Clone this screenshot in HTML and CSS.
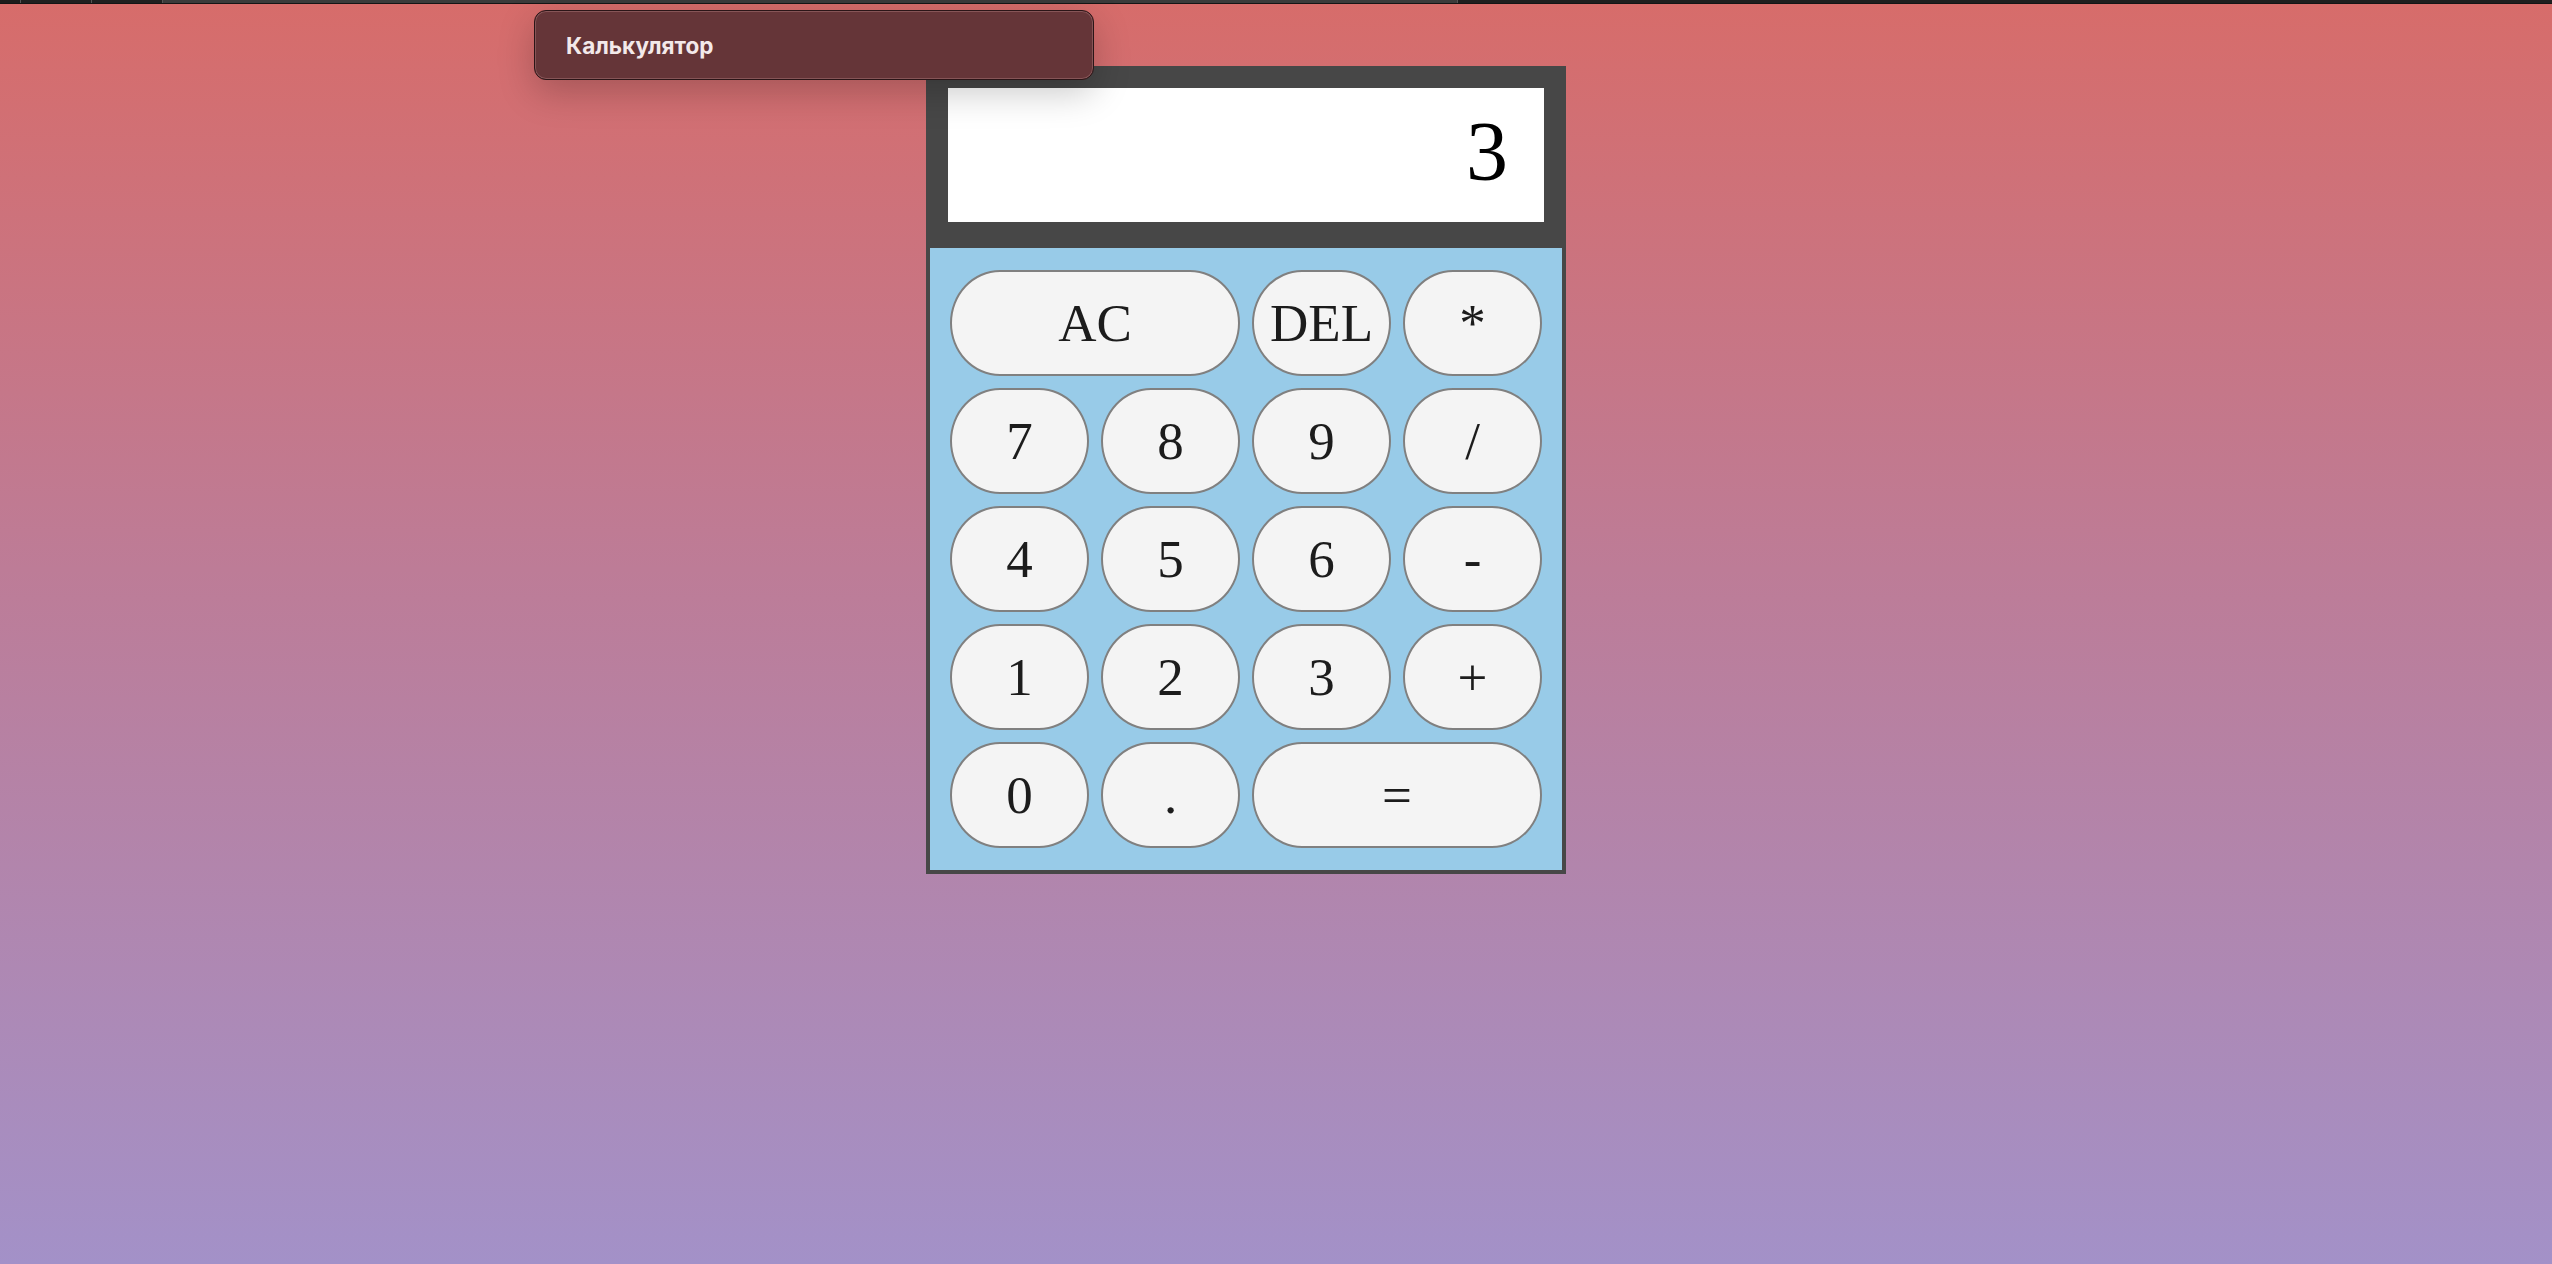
FILE: index.html
```html
<!DOCTYPE html>
<html lang="ru">
<head>
<meta charset="utf-8">
<title>Калькулятор</title>
<link rel="stylesheet" href="styles.css">
</head>
<body>
<div class="tabstrip">
  <span class="seg seg-a"></span>
  <span class="seg seg-b"></span>
  <span class="seg seg-c"></span>
  <span class="seg seg-d"></span>
  <span class="seg seg-e"></span>
</div>
<div class="popup">Калькулятор</div>
<main class="stage">
  <div class="calc">
    <div class="screen-area">
      <div class="screen">3</div>
    </div>
    <div class="keys">
      <button class="key wide">AC</button>
      <button class="key">DEL</button>
      <button class="key">*</button>
      <button class="key">7</button>
      <button class="key">8</button>
      <button class="key">9</button>
      <button class="key">/</button>
      <button class="key">4</button>
      <button class="key">5</button>
      <button class="key">6</button>
      <button class="key">-</button>
      <button class="key">1</button>
      <button class="key">2</button>
      <button class="key">3</button>
      <button class="key">+</button>
      <button class="key">0</button>
      <button class="key">.</button>
      <button class="key wide">=</button>
    </div>
  </div>
</main>
</body>
</html>
```
FILE: styles.css
```css
html, body {
  margin: 0;
  padding: 0;
}
body {
  min-height: 100vh;
  background: linear-gradient(to bottom, #d76c6a 0%, #bd7c97 45%, #a391c8 100%);
  font-family: "Liberation Serif", "Times New Roman", serif;
  position: relative;
}
.tabstrip {
  display: flex;
  height: 3px;
  border-bottom: 1px solid #151515;
  background: #555;
  gap: 1px;
}
.seg { display: block; height: 100%; }
.seg-a { width: 20px; background: #1c1c1c; }
.seg-b { width: 70px; background: #202020; }
.seg-c { width: 70px; background: #202020; }
.seg-d { width: 1294px; background: #3b3b3b; }
.seg-e { flex: 1; background: #1f1f1f; }

.popup {
  position: absolute;
  left: 534px;
  top: 10px;
  width: 560px;
  height: 70px;
  box-sizing: border-box;
  padding-left: 31px;
  display: flex;
  align-items: center;
  background: #653538;
  border: 1px solid #2b1517;
  box-shadow: inset 0 0 0 1px rgba(255, 200, 200, 0.22), 0 12px 36px rgba(0, 0, 0, 0.22);
  border-radius: 12px;
  color: #f3e9ea;
  font-family: "Inter", "Noto Sans", sans-serif;
  font-weight: 700;
  font-size: 22.5px;
  z-index: 2;
}

.stage {
  padding: 62px 0 0 926px;
}
.calc {
  width: 640px;
  box-sizing: border-box;
  background: #474747;
  padding: 0 4px 4px;
}
.screen-area {
  padding: 22px 18px 26px;
}
.screen {
  height: 134px;
  background: #ffffff;
  display: flex;
  align-items: center;
  justify-content: flex-end;
  padding-right: 36px;
  padding-bottom: 6px;
  font-size: 84px;
  color: #000;
  line-height: 1;
  box-sizing: border-box;
}
.keys {
  background: #98cbe8;
  padding: 22px 20px;
  display: grid;
  grid-template-columns: repeat(4, 1fr);
  grid-auto-rows: 106px;
  gap: 12px;
}
.key {
  margin: 0;
  padding: 0;
  background: #f4f4f4;
  border: 2px solid #808080;
  border-radius: 50px / 53px;
  font-family: "Liberation Serif", "Times New Roman", serif;
  font-size: 53px;
  color: #1c1c1c;
  line-height: 1;
}
.wide {
  grid-column: span 2;
}
```
